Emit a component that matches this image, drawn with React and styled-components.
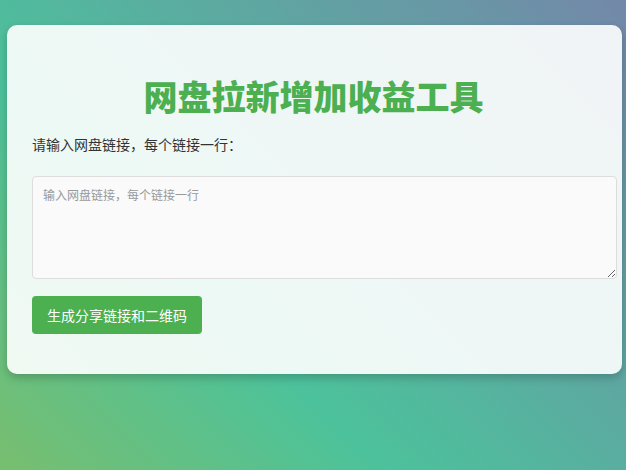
import styled, { createGlobalStyle } from 'styled-components';

const GlobalStyle = createGlobalStyle`
  html, body {
    margin: 0;
    padding: 0;
    height: 100%;
  }
  body {
    font-family: "Noto Sans CJK SC", "Noto Sans", sans-serif;
    background: linear-gradient(45deg, #78be6f 0%, #4cc29b 35%, #7388a9 100%);
    min-height: 470px;
    overflow: hidden;
  }
`;

const Page = styled.div`
  padding: 25px 4px 0 7px;
`;

const Card = styled.div`
  padding: 25px 27px 25px 25px;
  background: rgba(255, 255, 255, 0.9);
  border-radius: 10px;
  box-shadow: 0 4px 10px rgba(0, 0, 0, 0.2);
`;

const Title = styled.h1`
  margin: 22px 0 14px;
  text-align: center;
  color: #4caf50;
  font-size: 34px;
  line-height: 48px;
  font-weight: 900;
`;

const Label = styled.p`
  margin: 0 0 22px;
  font-size: 14px;
  line-height: 20px;
  color: #333;
`;

const LinkInput = styled.textarea`
  display: block;
  width: 100%;
  height: 81px;
  padding: 10px;
  margin: 0;
  border: 1px solid #ddd;
  border-radius: 4px;
  background: #fafafa;
  font-family: "Noto Sans CJK SC", "Noto Sans", sans-serif;
  font-size: 12px;
  line-height: 16px;
  color: #333;
  resize: vertical;

  &::placeholder {
    color: #999;
  }
`;

const Button = styled.button`
  display: block;
  margin: 17px 0 15px;
  padding: 9px 15px;
  border: none;
  border-radius: 4px;
  background: #4caf50;
  color: #fff;
  font-family: "Noto Sans CJK SC", "Noto Sans", sans-serif;
  font-size: 14px;
  line-height: 20px;
  cursor: pointer;
`;

export default function App() {
  return (
    <>
      <GlobalStyle />
      <Page>
        <Card>
          <Title>网盘拉新增加收益工具</Title>
          <Label>请输入网盘链接，每个链接一行：</Label>
          <LinkInput placeholder="输入网盘链接，每个链接一行" />
          <Button>生成分享链接和二维码</Button>
        </Card>
      </Page>
    </>
  );
}
